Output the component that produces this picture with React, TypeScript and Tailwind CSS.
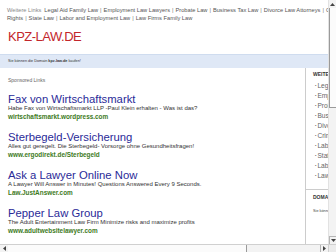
import React from "react";

const ads = [
  {
    title: "Fax von Wirtschaftsmarkt",
    desc: "Habe Fax von Wirtschaftsmarkt LLP -Paul Klein erhalten - Was ist das?",
    url: "wirtschaftsmarkt.wordpress.com",
  },
  {
    title: "Sterbegeld-Versicherung",
    desc: "Alles gut geregelt. Die Sterbegeld- Vorsorge ohne Gesundheitsfragen!",
    url: "www.ergodirekt.de/Sterbegeld",
  },
  {
    title: "Ask a Lawyer Online Now",
    desc: "A Lawyer Will Answer in Minutes! Questions Answered Every 9 Seconds.",
    url: "Law.JustAnswer.com",
  },
  {
    title: "Pepper Law Group",
    desc: "The Adult Entertainment Law Firm Minimize risks and maximize profits",
    url: "www.adultwebsitelawyer.com",
  },
];

const side = [
  "Legal Aid Family Law",
  "Employment Law Lawyers",
  "Probate Law",
  "Business Tax Law",
  "Divorce Law Attorneys",
  "Criminal Lawyers",
  "Labor Rights",
  "State Law",
  "Labor and Employment Law",
  "Law Firms Family Law",
];

function Sep() {
  return <span className="mx-[2px] text-[#777]">|</span>;
}

export default function App() {
  const line1 = [
    "Legal Aid Family Law",
    "Employment Law Lawyers",
    "Probate Law",
    "Business Tax Law",
    "Divorce Law Attorneys",
    "Criminal Lawyers",
  ];
  const line2 = ["State Law", "Labor and Employment Law", "Law Firms Family Law"];
  return (
    <div className="w-[336px] h-[252px] flex flex-col overflow-hidden bg-white font-['Liberation_Sans',Arial,sans-serif]">
      <div className="flex flex-1 min-h-0">
        <div className="flex-1 min-w-0 overflow-hidden flex flex-col">
          {/* top links */}
          <div className="pt-[6px] pl-[7px] text-[5.7px] leading-[8px] text-[#555] whitespace-nowrap">
            <div>
              <span className="text-[#888] mr-[3px]">Weitere Links</span>
              {line1.map((l, i) => (
                <span key={i}>
                  {l}
                  <Sep />
                </span>
              ))}
              <span>Civil</span>
            </div>
            <div>
              <span>Rights</span>
              {line2.map((l, i) => (
                <span key={i}>
                  <Sep />
                  {l}
                </span>
              ))}
            </div>
          </div>
          {/* logo */}
          <div className="mt-[8px] pl-[8px] h-[13px] text-[13px] leading-[13px] tracking-[-0.5px] text-[#c3262b] whitespace-nowrap">
            KPZ-LAW.DE
          </div>
          {/* blue bar */}
          <div className="mt-[11px] h-[14px] bg-[#dfe8f6] border-t border-[#cfdcef] flex items-center pl-[8px] text-[3.8px] text-[#333] whitespace-nowrap">
            Sie können die Domain&nbsp;<b>kpz-law.de</b>&nbsp;kaufen!
          </div>
          {/* main */}
          <div className="flex flex-1 min-h-0">
            <div className="w-[305px] shrink-0 pl-[8px] pt-[9px] whitespace-nowrap">
              <div className="h-[6px] text-[5px] leading-[6px] text-[#666]">Sponsored Links</div>
              <div className="mt-[11px] flex flex-col gap-[11px]">
                {ads.map((a, i) => (
                  <div key={i} className="flex flex-col">
                    <div className="h-[10px] text-[11.3px] leading-[10px] text-[#2a2a98]">{a.title}</div>
                    <div className="h-[8px] text-[6px] leading-[8px] text-[#333]">{a.desc}</div>
                    <div className="h-[9px] text-[6.4px] leading-[9px] font-bold text-[#3d7a1c]">{a.url}</div>
                  </div>
                ))}
              </div>
            </div>
            <div className="flex-1 min-w-0 border-l border-[#cccccc] whitespace-nowrap overflow-hidden">
              <div className="pl-[7px] pt-[3px] h-[12px] text-[5px] leading-[6px] font-bold text-[#333]">WEITERE LINKS</div>
              <div className="pl-[9px] pt-[1px] flex flex-col">
                {side.map((s, i) => (
                  <div key={i} className="h-[10px] text-[6.6px] leading-[10px] text-[#666]">
                    <span className="text-[4px] mr-[1px] align-middle">•</span>
                    {s}
                  </div>
                ))}
              </div>
              <div className="mt-[8px] border-t border-[#cccccc] pl-[7px] pt-[4px]">
                <div className="h-[6px] text-[5px] leading-[6px] font-bold text-[#333]">DOMAIN</div>
                <div className="mt-[9px] text-[3.8px] leading-[5px] text-[#444]">Sie können die Domain kaufen</div>
              </div>
            </div>
          </div>
        </div>
        {/* vertical scrollbar */}
        <div className="w-[8px] shrink-0 flex flex-col bg-[#f3f3f3] border-l border-[#e2e2e2]">
          <div className="h-[8px] flex items-center justify-center">
            <svg width="5" height="3" viewBox="0 0 5 3">
              <polygon points="2.5,0 5,3 0,3" fill="#444" />
            </svg>
          </div>
          <div className="h-[100px] bg-[#fbfbfb] border-b border-l border-[#9a9a9a]" />
          <div className="flex-1" />
          <div className="h-[8px] flex items-center justify-center border-t border-l border-[#b5b5b5]">
            <svg width="5" height="3" viewBox="0 0 5 3">
              <polygon points="0,0 5,0 2.5,3" fill="#444" />
            </svg>
          </div>
        </div>
      </div>
      {/* horizontal scrollbar */}
      <div className="h-[8px] shrink-0 flex bg-[#f3f3f3] border-t border-[#d0d0d0]">
        <div className="w-[8px] flex items-center justify-center">
          <svg width="3" height="5" viewBox="0 0 3 5">
            <polygon points="0,2.5 3,0 3,5" fill="#444" />
          </svg>
        </div>
        <div className="w-[239px] bg-[#fbfbfb] border-r border-[#9a9a9a]" />
        <div className="flex-1" />
        <div className="w-[8px] flex items-center justify-center border-l border-[#b5b5b5]">
          <svg width="3" height="5" viewBox="0 0 3 5">
            <polygon points="0,0 3,2.5 0,5" fill="#444" />
          </svg>
        </div>
        <div className="w-[8px] bg-[#ececec] border-l border-[#d0d0d0]" />
      </div>
    </div>
  );
}
